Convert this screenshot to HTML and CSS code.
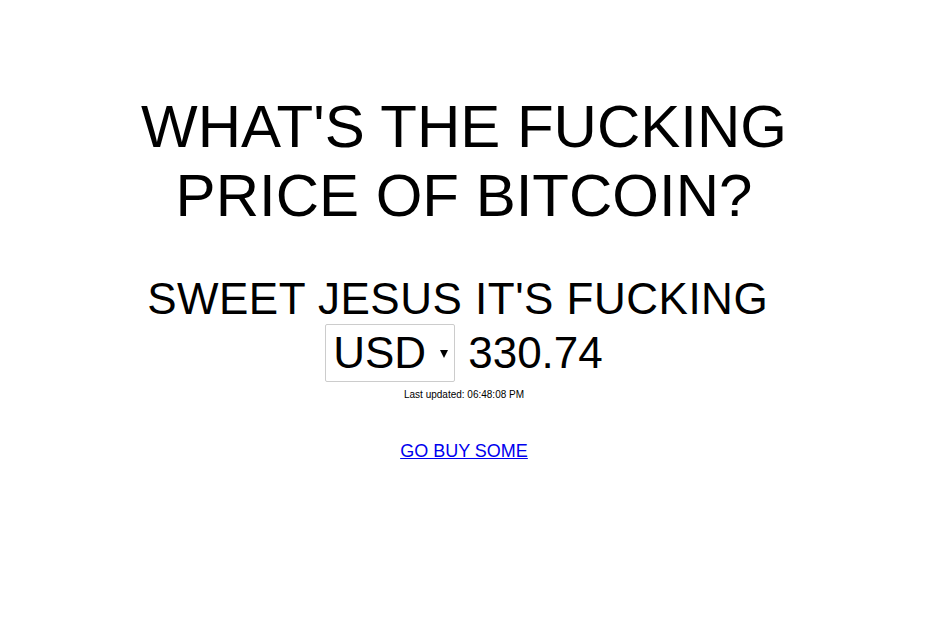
FILE: index.html
```html
<!DOCTYPE html>
<html>
<head>
<meta charset="utf-8">
<link rel="stylesheet" href="styles.css">
</head>
<body>
<div class="page">
  <h1 class="title">WHAT'S THE FUCKING<br>PRICE OF BITCOIN?</h1>
  <div class="answer">
    <div class="answer-line">SWEET JESUS IT'S FUCKING&nbsp;</div>
    <div class="price-line">
      <div class="select"><span class="select-value">USD</span><span class="select-arrow"></span></div>
      <span class="price">330.74</span>
    </div>
  </div>
  <div class="updated">Last updated: 06:48:08 PM</div>
  <a class="buy" href="#">GO BUY SOME</a>
</div>
</body>
</html>
```

FILE: styles.css
```css
html, body {
  margin: 0;
  padding: 0;
  background: #fff;
}
body {
  font-family: "Liberation Sans", Arial, sans-serif;
  color: #000;
}
.page {
  width: 928px;
  display: flex;
  flex-direction: column;
  align-items: center;
  text-align: center;
  padding-top: 92px;
}
.title {
  margin: 0;
  font-size: 60px;
  font-weight: normal;
  line-height: 69px;
}
.answer {
  margin-top: 46px;
  display: flex;
  flex-direction: column;
  align-items: center;
}
.answer-line {
  font-size: 44px;
  line-height: 46px;
  letter-spacing: 0.5px;
}
.price-line {
  display: flex;
  align-items: center;
  gap: 13px;
  margin-top: 2px;
}
.select {
  display: flex;
  align-items: center;
  box-sizing: border-box;
  height: 58px;
  width: 130px;
  border: 1px solid #ccc;
  border-radius: 2px;
  padding: 0 6px 0 7px;
  justify-content: space-between;
}
.select-value {
  font-size: 44px;
  line-height: 50px;
}
.select-arrow {
  width: 0;
  height: 0;
  border-left: 4px solid transparent;
  border-right: 4px solid transparent;
  border-top: 8px solid #000;
  margin-top: 2px;
}
.price {
  font-size: 44px;
  line-height: 50px;
}
.updated {
  margin-top: 7px;
  font-size: 10px;
  line-height: 12px;
}
.buy {
  margin-top: 40px;
  font-size: 18px;
  color: #00e;
}
```
